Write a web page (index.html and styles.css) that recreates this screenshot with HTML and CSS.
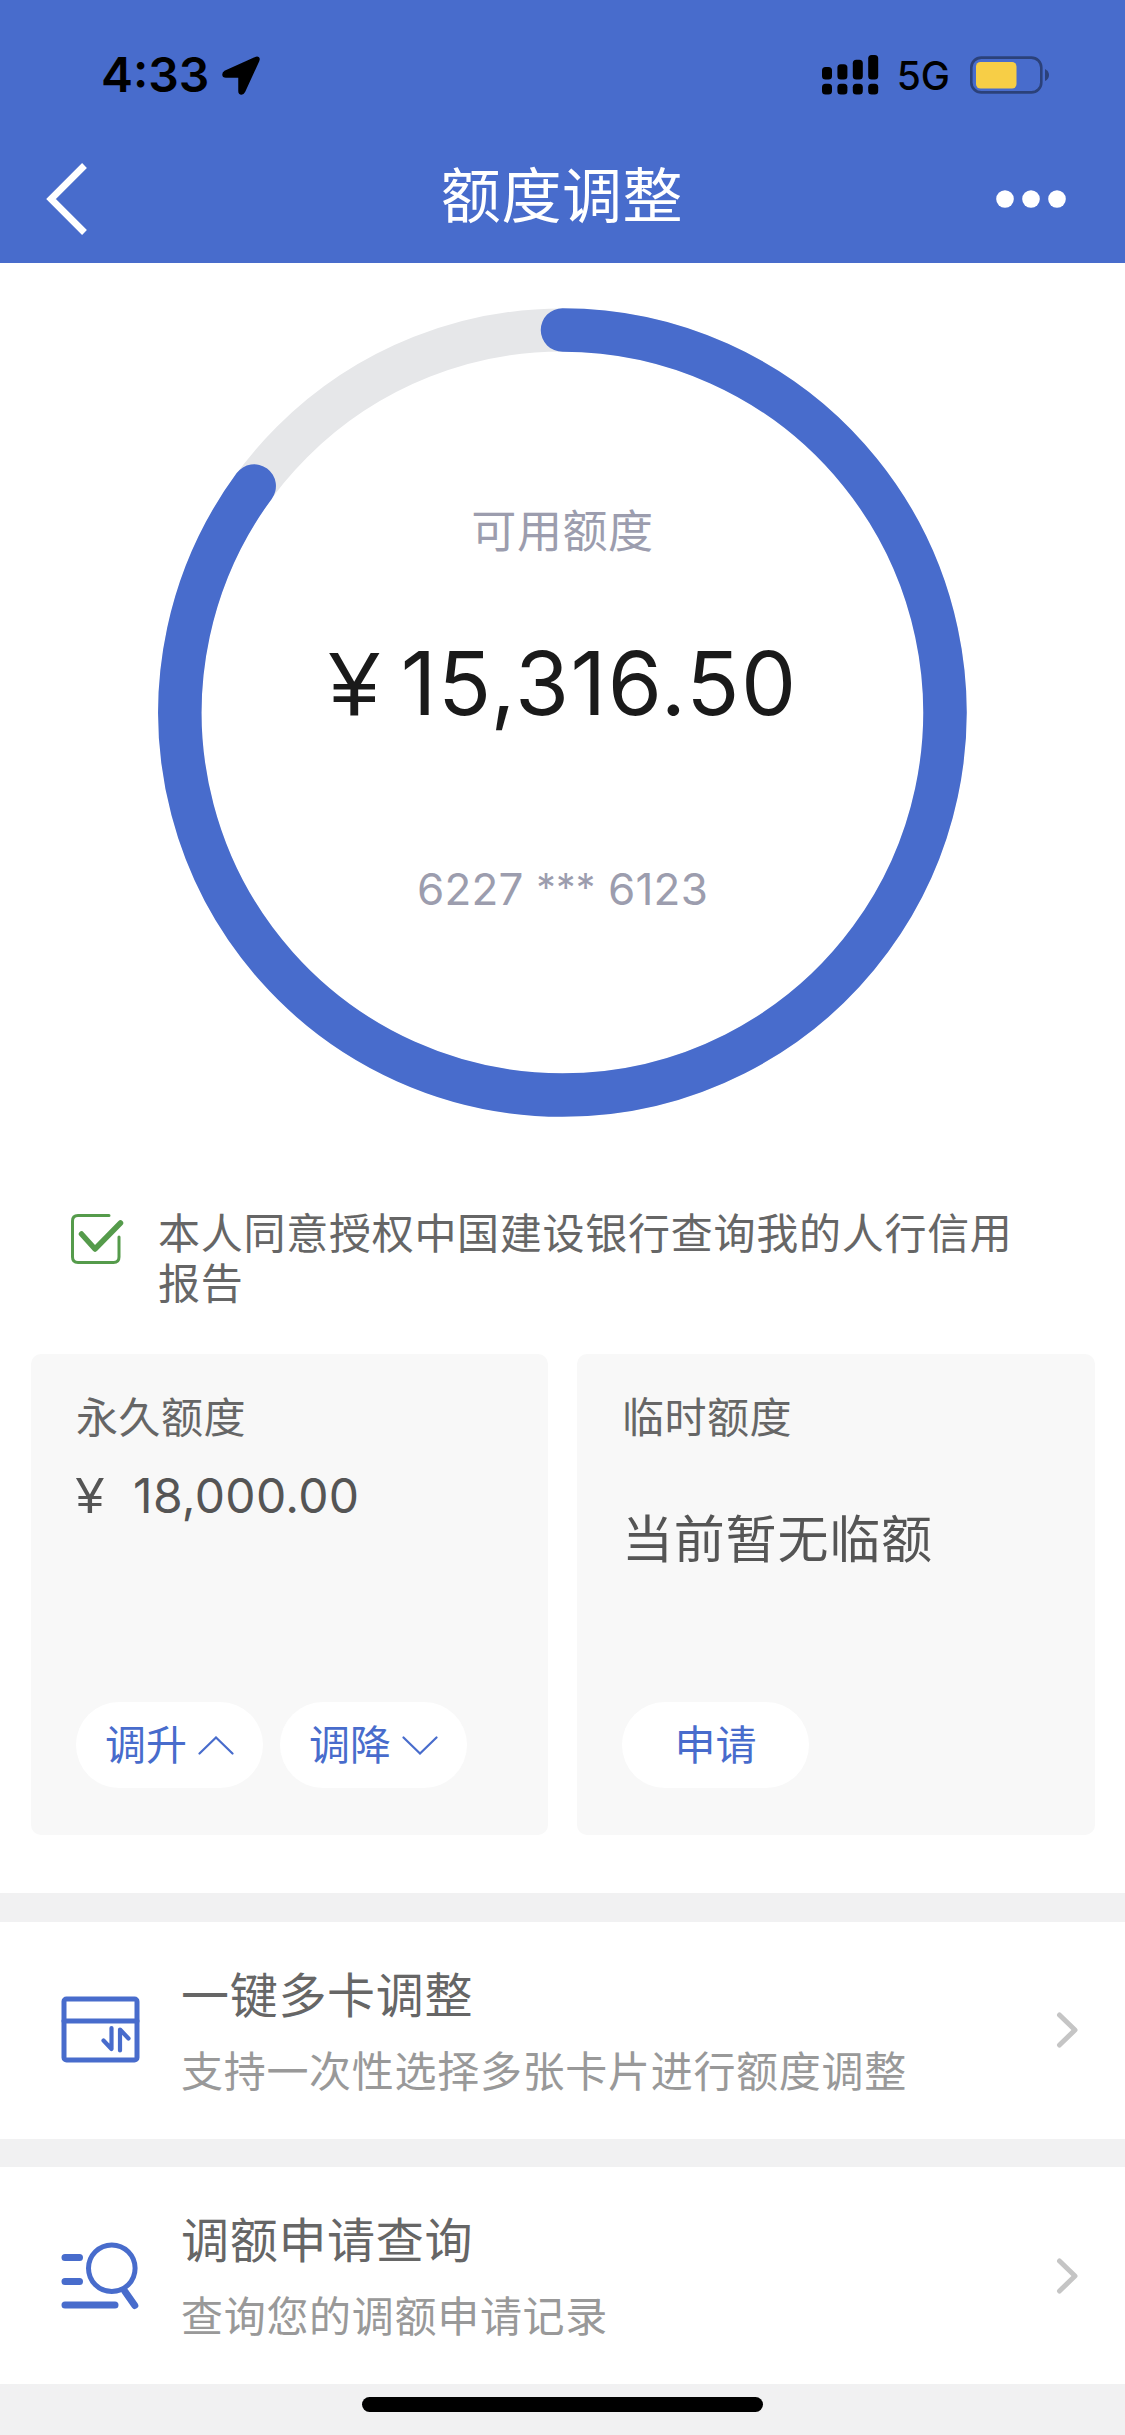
FILE: index.html
```html
<!DOCTYPE html>
<html lang="zh-CN">
<head>
<meta charset="utf-8">
<title>额度调整</title>
<link rel="stylesheet" href="styles.css">
</head>
<body>
<header class="header">
  <div class="status">
    <div class="status-left">
      <span class="time">4:33</span>
      <svg class="location" width="38" height="39" viewBox="0 0 38 39"><path d="M33 2.500 L3 16 Q1.500 17 1.500 18.500 Q1.500 20.500 4 20.500 H17.500 V35 Q17.500 37.500 19.500 37.500 Q21 37.500 22 35.500 L36 5 Q37 2.800 36 2 Q35 1.400 33 2.500Z" fill="#000" stroke="#000" stroke-width="2.500" stroke-linejoin="round"/></svg>
    </div>
    <div class="status-right">
      <svg class="signal" width="57" height="40" viewBox="0 0 57 40">
        <rect x="0" y="12" width="10" height="12.500" rx="3.500"/><rect x="15.400" y="9.300" width="10" height="15.200" rx="3.500"/><rect x="30.800" y="4.700" width="10" height="19.800" rx="3.500"/><rect x="46.200" y="0" width="10" height="24.500" rx="3.500"/>
        <rect x="0" y="28.700" width="10" height="10.800" rx="3.500"/><rect x="15.400" y="28.700" width="10" height="10.800" rx="3.500"/><rect x="30.800" y="28.700" width="10" height="10.800" rx="3.500"/><rect x="46.200" y="28.700" width="10" height="10.800" rx="3.500"/>
      </svg>
      <span class="network">5G</span>
      <svg class="battery" width="80" height="38" viewBox="0 0 80 38">
        <rect x="1.300" y="1.600" width="70" height="34.800" rx="10" fill="none" stroke="#2b417a" stroke-width="2.600"/>
        <rect x="6" y="6" width="40.500" height="26.500" rx="4.500" fill="#f7ce46"/>
        <path d="M75 13 Q79 15 79 19 Q79 23 75 25Z" fill="#2b417a"/>
      </svg>
    </div>
  </div>
  <nav class="nav">
    <svg class="back" width="44" height="72" viewBox="0 0 44 72"><path d="M38.500 2.500 L5 36 L38.500 69.500" fill="none" stroke="#fff" stroke-width="6.800"/></svg>
    <h1 class="title">额度调整</h1>
    <svg class="more" width="70" height="18" viewBox="0 0 70 18"><circle cx="9" cy="9" r="8.800"/><circle cx="35" cy="9" r="8.800"/><circle cx="61" cy="9" r="8.800"/></svg>
  </nav>
</header>

<main>
  <section class="gauge">
    <svg class="ring" width="809" height="809" viewBox="0 0 809 809">
      <circle cx="404.500" cy="404.500" r="382.500" fill="none" stroke="#e6e7e9" stroke-width="43"/>
      <path d="M404.500 22 A382.500 382.500 0 1 1 96.200 178" fill="none" stroke="#486ccc" stroke-width="43.500" stroke-linecap="round"/>
    </svg>
    <div class="gauge-text">
      <span class="gauge-label">可用额度</span>
      <span class="gauge-amount"><span class="gauge-yen">¥</span>15,316.50</span>
      <span class="gauge-card">6227 <span class="mask">***</span> 6123</span>
    </div>
  </section>

  <label class="consent">
    <svg class="check" width="54" height="52" viewBox="0 0 54 52" fill="none" stroke="#559b4b" stroke-linecap="round" stroke-linejoin="round">
      <path d="M38 2.500 H7 Q1.500 2.500 1.500 8 V44 Q1.500 49.500 7 49.500 H42.500 Q48 49.500 48 44 V24" stroke-width="3"/>
      <path d="M10.500 21 L24 36 L49.500 10" stroke-width="5.500"/>
    </svg>
    <span class="consent-text">本人同意授权中国建设银行查询我的人行信用报告</span>
  </label>

  <section class="limits">
    <article class="limit">
      <h2 class="limit-name">永久额度</h2>
      <p class="limit-amount"><span class="limit-yen">¥</span>18,000.00</p>
      <div class="actions">
        <button class="pill">调升<svg width="36" height="19" viewBox="0 0 36 19"><path d="M1.500 17.500 L18 1.500 L34.500 17.500"/></svg></button>
        <button class="pill">调降<svg width="36" height="19" viewBox="0 0 36 19"><path d="M1.500 1.500 L18 17.500 L34.500 1.500"/></svg></button>
      </div>
    </article>
    <article class="limit">
      <h2 class="limit-name">临时额度</h2>
      <p class="limit-empty">当前暂无临额</p>
      <div class="actions"><button class="pill">申请</button></div>
    </article>
  </section>

  <section class="entries">
    <a class="entry">
      <svg class="entry-icon" width="80" height="70" viewBox="0 0 80 70" fill="none" stroke="#486ccc" stroke-width="5" stroke-linecap="round" stroke-linejoin="round">
        <rect x="3" y="4" width="73" height="61" rx="2.500"/><path d="M3 26 H76"/>
        <path d="M42.500 45.500 L50.500 54 V33 M59 55.500 V34.500 L67.500 43.500" stroke-width="4.200"/>
      </svg>
      <div class="entry-text">
        <h3 class="entry-title">一键多卡调整</h3>
        <p class="entry-desc">支持一次性选择多张卡片进行额度调整</p>
      </div>
      <svg class="arrow" width="24" height="36" viewBox="0 0 24 36"><path d="M3.500 3 L19 18 L3.500 33"/></svg>
    </a>
    <a class="entry">
      <svg class="entry-icon" width="80" height="70" viewBox="0 0 80 70" fill="none" stroke="#486ccc" stroke-linecap="round">
        <circle cx="50.800" cy="27.200" r="23.300" stroke-width="5"/>
        <path d="M64 50.500 L73.800 64.500" stroke-width="7"/>
        <path d="M4 16.500 H18.500 M4 40.500 H18.500 M4 64 H54" stroke-width="7"/>
      </svg>
      <div class="entry-text">
        <h3 class="entry-title">调额申请查询</h3>
        <p class="entry-desc">查询您的调额申请记录</p>
      </div>
      <svg class="arrow" width="24" height="36" viewBox="0 0 24 36"><path d="M3.500 3 L19 18 L3.500 33"/></svg>
    </a>
  </section>
</main>
<footer class="home"><div class="home-bar"></div></footer>
</body>
</html>
```

FILE: styles.css
```css
* { box-sizing: border-box; margin: 0; padding: 0; }
body {
  width: 1125px;
  height: 2435px;
  overflow: hidden;
  background: #fff;
  color: #666;
  font-family: "Inter", "Noto Sans CJK SC", sans-serif;
  font-weight: 400;
}
svg { display: block; flex: none; }
h1, h2, h3 { font-weight: inherit; }

.header { height: 262.5px; background: #486ccc; }
.status {
  display: flex;
  justify-content: space-between;
  height: 134px;
  padding: 16px 75px 0 101px;
  color: #000;
}
.status-left, .status-right { display: flex; align-items: center; }
.time { font-size: 48px; line-height: 60px; font-weight: 600; }
.location { margin-left: 13px; }
.signal { margin-right: 18px; }
.network { font-size: 39px; line-height: 60px; font-weight: 500; margin-right: 20px; padding-top: 2px; }
.nav {
  display: grid;
  grid-template-columns: 1fr auto 1fr;
  align-items: center;
  height: 130px;
  padding: 0 59px 0 46px;
}
.title {
  font-size: 60px;
  line-height: 76px;
  letter-spacing: 0.6px;
  padding-bottom: 6px;
  margin-left: 12px;
  color: #fff;
}
.more { justify-self: end; fill: #fff; }

.gauge { display: grid; width: 809px; margin: 45.5px auto 0 158px; }
.ring, .gauge-text { grid-area: 1 / 1; }
.gauge-text {
  display: flex;
  flex-direction: column;
  align-items: center;
  padding-top: 201px;
  white-space: nowrap;
}
.gauge-label { font-size: 45px; line-height: 45px; letter-spacing: 0.6px; color: #9c9dae; }
.gauge-amount {
  margin-top: 85px;
  padding-left: 2px;
  font-size: 87.5px;
  line-height: 88px;
  letter-spacing: 1.6px;
  color: #1a1a1a;
}
.gauge-yen { margin-right: 20px; font-family: "Liberation Sans", sans-serif; font-size: 90px; }
.gauge-card { margin-top: 138.5px; font-size: 44px; line-height: 44px; letter-spacing: 0.2px; color: #9c9dae; }
.mask { font-size: 39px; vertical-align: 3px; line-height: 1; }

.consent { display: flex; margin-top: 92px; padding: 0 90px 0 71px; }
.check { margin-top: 4px; }
.consent-text {
  margin-left: 33px;
  font-size: 42px;
  line-height: 50.3px;
  letter-spacing: 0.73px;
}

.limits {
  display: grid;
  grid-template-columns: 517px 518px;
  gap: 29px;
  height: 539px;
  margin-top: 44.5px;
  padding: 0 30px 58.5px 31px;
}
.limit {
  display: flex;
  flex-direction: column;
  padding: 39px 45px 46.5px;
  border-radius: 10px;
  background: #f8f8f8;
}
.limit-name { font-size: 42px; line-height: 50px; letter-spacing: 0.5px; }
.limit-amount { margin-top: 23px; font-size: 48px; line-height: 60px; letter-spacing: 0.3px; color: #555; }
.limit-yen { margin-right: 29px; font-family: "Liberation Sans", sans-serif; font-size: 50px; }
.limit-empty { margin-top: 67px; font-size: 51px; line-height: 60px; letter-spacing: 0.8px; color: #555; }
.actions { display: flex; gap: 17px; margin-top: auto; }
.pill {
  display: flex;
  align-items: center;
  justify-content: center;
  gap: 11px;
  width: 187px;
  height: 86px;
  padding-bottom: 1px;
  border: 0;
  border-radius: 43px;
  background: #fff;
  color: #486ccc;
  font: inherit;
  font-size: 41px;
  line-height: 50px;
}
.pill svg { margin-top: 1px; }
.pill path { fill: none; stroke: #486ccc; stroke-width: 2.2; stroke-linecap: round; }

.entries { background: #f1f1f2; padding-top: 28.5px; }
.entry {
  display: flex;
  align-items: center;
  height: 217px;
  margin-bottom: 28.5px;
  padding: 0 45px 0 60px;
  background: #fff;
}
.entry:last-child { margin-bottom: 0; }
.entry-icon { margin-left: 0.5px; }
.entry-text { flex: 1; margin-left: 40.5px; padding-top: 2px; }
.entry-title { font-size: 48px; line-height: 60px; letter-spacing: 0.7px; }
.entry-desc { margin-top: 21px; font-size: 42px; line-height: 50px; letter-spacing: 0.7px; color: #999; }
.arrow path { fill: none; stroke: #c5c5c5; stroke-width: 5; stroke-linecap: round; stroke-linejoin: round; }

.home { height: 60px; padding-top: 13px; background: #f1f1f2; }
.home-bar { width: 401px; height: 15px; margin: 0 auto; border-radius: 8px; background: #000; }
```
